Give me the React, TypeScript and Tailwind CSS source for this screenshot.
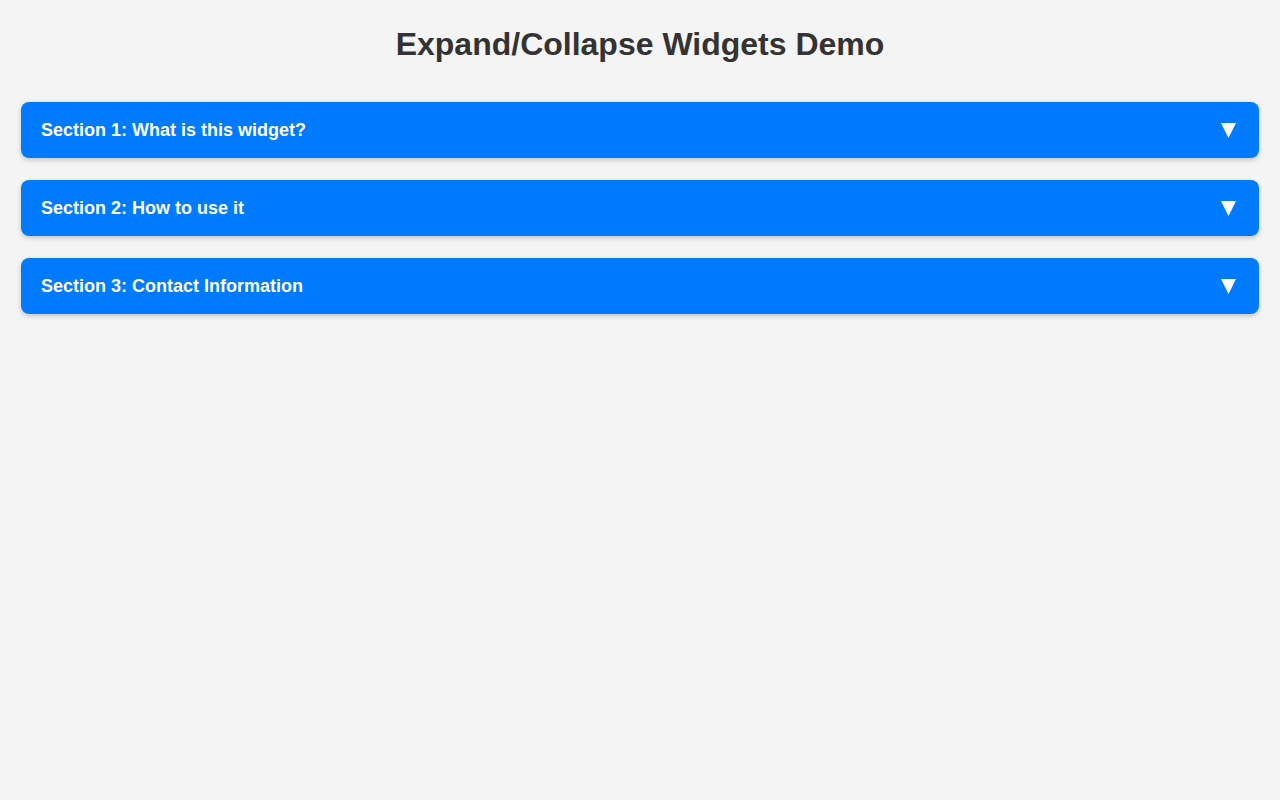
import React, { useState } from 'react';

const SECTIONS = [
  { title: 'Section 1: What is this widget?', body: 'This widget lets you expand and collapse sections of content.' },
  { title: 'Section 2: How to use it', body: 'Click a section header to show or hide its content.' },
  { title: 'Section 3: Contact Information', body: 'Email us at info@example.com.' },
];

const Arrow: React.FC<{ open: boolean }> = ({ open }) => (
  <svg
    width="15"
    height="15"
    viewBox="0 0 15 15"
    className={`mr-[3px] transition-transform ${open ? 'rotate-180' : ''}`}
    aria-hidden="true"
  >
    <polygon points="0,0 15,0 7.5,15" fill="#ffffff" />
  </svg>
);

const App: React.FC = () => {
  const [open, setOpen] = useState<number | null>(null);

  return (
    <div className="min-h-screen bg-[#f4f4f4] px-[21px] pb-8 font-['Liberation_Sans',Arial,sans-serif]">
      <h1 className="pt-[26px] text-center text-[32px] font-bold leading-[37px] text-[#333333]">
        Expand/Collapse Widgets Demo
      </h1>

      <div className="mt-[39px] flex flex-col gap-[22px]">
        {SECTIONS.map((s, i) => {
          const isOpen = open === i;
          return (
            <div key={s.title} className="rounded-[8px] shadow-[0_2px_5px_rgba(0,0,0,0.2)]">
              <button
                onClick={() => setOpen(isOpen ? null : i)}
                className="flex h-[56px] w-full cursor-pointer items-center justify-between rounded-[8px] bg-[#007bff] px-5 text-left text-[18px] font-bold text-white"
              >
                <span>{s.title}</span>
                <Arrow open={isOpen} />
              </button>
              {isOpen && (
                <div className="rounded-b-[8px] bg-white px-5 py-4 text-[15px] text-[#333333]">{s.body}</div>
              )}
            </div>
          );
        })}
      </div>
    </div>
  );
};

export default App;
